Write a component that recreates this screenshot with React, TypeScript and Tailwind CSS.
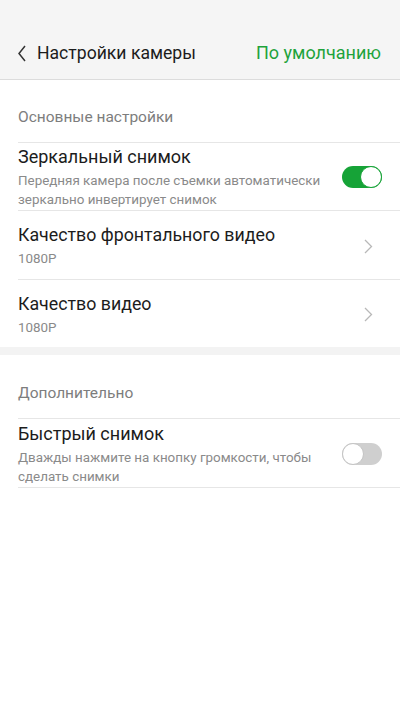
import { useState } from "react";

const Chevron = () => (
  <svg width="9" height="15" viewBox="0 0 9 15" fill="none">
    <path d="M1 1l6.5 6.5L1 14" stroke="#b8b8b8" strokeWidth="1.3" />
  </svg>
);

const Toggle = ({ on, onClick }: { on: boolean; onClick: () => void }) => (
  <button
    onClick={onClick}
    className={`relative flex h-[22px] w-[40px] shrink-0 items-center rounded-full ${
      on ? "bg-[#16a337]" : "bg-[#cfcfcf]"
    }`}
  >
    <span
      className={`absolute top-0 h-[22px] w-[22px] rounded-full border bg-white ${
        on ? "right-0 border-[#16a337]" : "left-0 border-[#c4c4c4]"
      }`}
    />
  </button>
);

export default function App() {
  const [mirror, setMirror] = useState(true);
  const [quick, setQuick] = useState(false);

  return (
    <div className="min-h-[711px] w-[400px] bg-white font-['Roboto',sans-serif]">
      <header className="flex h-[80px] items-start border-b border-[#dcdcdc] bg-[#f5f5f5] pl-[18px] pr-[19px] pt-[41px]">
        <div className="flex items-center gap-[11px]">
          <svg width="8" height="17" viewBox="0 0 8 17" fill="none">
            <path d="M7 1L1 8.5 7 16" stroke="#333" strokeWidth="1.5" />
          </svg>
          <span className="text-[17.6px] leading-[24px] text-[#1c1c1c]">Настройки камеры</span>
        </div>
        <span className="ml-auto text-[18px] leading-[24px] text-[#1ea33b]">По умолчанию</span>
      </header>

      <div className="px-[18px] pb-[15px] pt-[27px] text-[15.5px] leading-[20px] text-[#7d7d7d]">
        Основные настройки
      </div>

      <div className="ml-[18px] flex items-center border-t border-[#e6e6e6] pb-[1px] pr-[18px] pt-[2px]">
        <div className="flex-1">
          <div className="text-[18px] leading-[24px] text-[#1c1c1c]">Зеркальный снимок</div>
          <div className="mt-[2px] pr-[16px] text-[13.4px] leading-[19px] text-[#8a8a8a]">
            Передняя камера после съемки автоматически зеркально инвертирует снимок
          </div>
        </div>
        <Toggle on={mirror} onClick={() => setMirror(!mirror)} />
      </div>

      {["Качество фронтального видео", "Качество видео"].map(title => (
        <div
          key={title}
          className="ml-[18px] flex items-center border-t border-[#e6e6e6] pb-[9.5px] pr-[27px] pt-[12px]"
        >
          <div className="flex-1">
            <div className="text-[17.8px] leading-[24px] text-[#1c1c1c]">{title}</div>
            <div className="mt-[2px] text-[13.4px] leading-[20px] text-[#8a8a8a]">1080P</div>
          </div>
          <Chevron />
        </div>
      ))}

      <div className="h-[8px] bg-[#f3f3f3]" />

      <div className="px-[18px] pb-[15px] pt-[28px] text-[15.5px] leading-[20px] text-[#7d7d7d]">
        Дополнительно
      </div>

      <div className="ml-[18px] flex items-center border-y border-[#e6e6e6] pb-[1px] pr-[18px] pt-[3px]">
        <div className="flex-1">
          <div className="text-[18px] leading-[24px] text-[#1c1c1c]">Быстрый снимок</div>
          <div className="mt-[2px] pr-[16px] text-[13.4px] leading-[19px] text-[#8a8a8a]">
            Дважды нажмите на кнопку громкости, чтобы сделать снимки
          </div>
        </div>
        <Toggle on={quick} onClick={() => setQuick(!quick)} />
      </div>
    </div>
  );
}
